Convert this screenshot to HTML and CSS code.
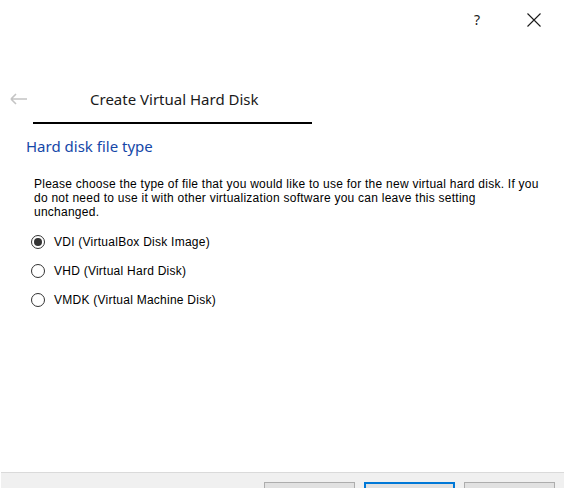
FILE: index.html
```html
<!DOCTYPE html>
<html>
<head>
<meta charset="utf-8">
<link rel="stylesheet" href="styles.css">
</head>
<body>
<div class="window">
  <div class="titlebar">
    <span class="help">?</span>
    <svg class="close" width="14" height="14" viewBox="0 0 14 14"><path d="M0.5 0.5 L13.5 13.5 M13.5 0.5 L0.5 13.5" stroke="#1a1a1a" stroke-width="1.1" fill="none"/></svg>
  </div>
  <div class="header">
    <svg class="back" width="18" height="12" viewBox="0 0 18 12"><path d="M1 6 H17 M1 6 L6 1 M1 6 L6 11" stroke="#c4c4c4" stroke-width="1.6" fill="none"/></svg>
    <span class="title">Create Virtual Hard Disk</span>
  </div>
  <div class="underline"></div>
  <div class="subtitle">Hard disk file type</div>
  <p class="desc">Please choose the type of file that you would like to use for the new virtual hard disk. If you do not need to use it with other virtualization software you can leave this setting unchanged.</p>
  <div class="options">
    <label class="option"><span class="radio checked"></span><span>VDI (VirtualBox Disk Image)</span></label>
    <label class="option"><span class="radio"></span><span>VHD (Virtual Hard Disk)</span></label>
    <label class="option"><span class="radio"></span><span>VMDK (Virtual Machine Disk)</span></label>
  </div>
  <div class="spacer"></div>
  <div class="footer">
    <div class="btn"></div>
    <div class="btn default"></div>
    <div class="btn"></div>
  </div>
</div>
</body>
</html>
```
FILE: styles.css
```css
html, body {
  margin: 0;
  padding: 0;
  background: #ffffff;
}
.window {
  width: 564px;
  height: 488px;
  display: flex;
  flex-direction: column;
  overflow: hidden;
  font-family: "Liberation Sans", Arial, sans-serif;
  color: #000;
}
.titlebar {
  height: 40px;
  display: flex;
  justify-content: flex-end;
  align-items: center;
  padding-right: 23px;
  box-sizing: border-box;
}
.help {
  font-family: "Noto Sans", sans-serif;
  font-size: 14px;
  color: #1a1a1a;
  margin-right: 47px;
  margin-top: -1px;
}
.close {
  display: block;
}
.header {
  height: 40px;
  margin-top: 39px;
  display: flex;
  align-items: center;
}
.back {
  margin-left: 10px;
  margin-right: 62px;
}
.title {
  font-family: "Noto Sans", sans-serif;
  font-size: 15px;
  color: #1a1a1a;
}
.underline {
  margin-left: 33px;
  width: 279px;
  height: 2px;
  background: #000;
  margin-top: 3px;
}
.subtitle {
  margin: 12px 0 0 26px;
  font-family: "Noto Sans", sans-serif;
  font-size: 15px;
  color: #1547a8;
  line-height: 20px;
}
.desc {
  margin: 21px 0 0 34px;
  width: 506px;
  font-size: 12px;
  line-height: 14px;
  letter-spacing: 0.25px;
}
.options {
  margin: 15px 0 0 31px;
  display: flex;
  flex-direction: column;
  gap: 13px;
}
.option {
  display: flex;
  align-items: center;
  height: 16px;
  font-size: 12px;
  letter-spacing: 0.25px;
}
.radio {
  width: 12px;
  height: 12px;
  border: 1px solid #333;
  border-radius: 50%;
  margin-right: 9px;
  position: relative;
  background: #fff;
}
.radio.checked::after {
  content: "";
  position: absolute;
  left: 2px;
  top: 2px;
  width: 8px;
  height: 8px;
  border-radius: 50%;
  background: #333;
}
.spacer {
  flex: 1;
}
.footer {
  height: 16px;
  margin-left: 1px;
  border-top: 1px solid #dadada;
  background: #f0f0f0;
  display: flex;
  justify-content: flex-end;
  padding-right: 9px;
  gap: 9px;
  align-items: flex-start;
  padding-top: 9px;
  box-sizing: border-box;
  flex-shrink: 0;
}
.btn {
  width: 89px;
  height: 24px;
  border: 1px solid #adadad;
  background: #e1e1e1;
  flex-shrink: 0;
}
.btn.default {
  width: 87px;
  border: 2px solid #0078d7;
}
```
